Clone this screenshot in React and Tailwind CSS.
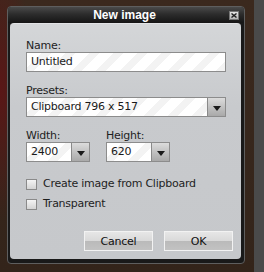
import React from 'react';

function Arrow({ w }) {
  return (
    <div className={`${w} h-full flex items-center justify-center border-l border-[#8a8a8a] bg-[linear-gradient(#dcdcdc,#c4c4c4_45%,#a9a9a9)]`}>
      <svg width="8" height="5" viewBox="0 0 8 5" className="mt-[2px]">
        <path d="M0 0h8L4 5z" fill="#1a1a1a" />
      </svg>
    </div>
  );
}

const stripes = 'bg-[repeating-linear-gradient(135deg,#ffffff_0px,#ffffff_10px,#f3f3f3_10px,#f3f3f3_17px)]';

function Field({ value, width, arrowW }) {
  return (
    <div className={`${width} h-[20px] flex border border-[#8c8c8c] ${stripes}`}>
      <div className="flex-1 pl-[4px] leading-[18px] text-[#1a1a1a]">{value}</div>
      {arrowW && <Arrow w={arrowW} />}
    </div>
  );
}

function Check({ label }) {
  return (
    <div className="flex items-center h-[14px] gap-[6px]">
      <div className="w-[11px] h-[11px] border border-[#8a8a8a] bg-[linear-gradient(#f4f4f4,#d4d4d4)]" />
      <span className="text-[#1e1e1e] leading-[14px]">{label}</span>
    </div>
  );
}

function Btn({ children }) {
  return (
    <div className="w-[69px] h-[20px] border border-[#f2f2f2] bg-[linear-gradient(#e6e6e6,#d9d9d9_50%,#bababa_50%,#c2c2c2)] flex items-center justify-center text-[#111] leading-none">
      {children}
    </div>
  );
}

export default function App() {
  return (
    <div className="flex w-[264px] h-[272px] bg-[radial-gradient(ellipse_34px_130px_at_0px_90px,#5a1616,transparent),linear-gradient(#3b291e,#33241a)] font-['DejaVu_Sans',sans-serif] text-[11px] tracking-[-0.25px]">
      <div className="w-[254px] pt-[6px] pl-[7px]">
        <div className="w-[238px] h-[258px] rounded-[4px] border border-[#5e5e5e] bg-[#191919] flex flex-col pl-[2px] pr-[3px] pb-[4px]">
          <div className="h-[16px] grid grid-cols-[1fr_auto_1fr] items-center bg-[linear-gradient(#4a4a4a,#2c2c2c_45%,#151515)] -mx-[2px] px-[2px] rounded-t-[3px] mr-[-3px] pr-[5px]">
            <div />
            <div className="text-white font-['Liberation_Sans',sans-serif] font-bold text-[12px] leading-none tracking-normal">New image</div>
            <div className="justify-self-end w-[10px] h-[9px] bg-[linear-gradient(#e4e4e4,#b8b8b8)] border border-[#777] flex items-center justify-center">
              <svg width="6" height="5" viewBox="0 0 6 5">
                <path d="M0.5 0.5L5.5 4.5M5.5 0.5L0.5 4.5" stroke="#222" strokeWidth="1.4" />
              </svg>
            </div>
          </div>
          <div className="flex-1 rounded-[4px] bg-[linear-gradient(#d4d6d8,#c8cacd_35%,#c6c8cb)] border-t border-[#e2e3e5] flex flex-col pl-[16px] pr-[15px] pt-[15px] pb-[8px]">
            <div className="leading-[13px] text-[#1e1e1e]">Name:</div>
            <Field value="Untitled" width="w-[200px]" />
            <div className="mt-[12px] leading-[13px] text-[#1e1e1e]">Presets:</div>
            <Field value="Clipboard 796 x 517" width="w-[200px]" arrowW="w-[18px]" />
            <div className="mt-[12px] flex gap-[16px]">
              <div>
                <div className="leading-[13px] text-[#1e1e1e]">Width:</div>
                <Field value="2400" width="w-[64px]" arrowW="w-[18px]" />
              </div>
              <div>
                <div className="leading-[13px] text-[#1e1e1e]">Height:</div>
                <Field value="620" width="w-[64px]" arrowW="w-[18px]" />
              </div>
            </div>
            <div className="mt-[15px] flex flex-col gap-[6px]">
              <Check label="Create image from Clipboard" />
              <Check label="Transparent" />
            </div>
            <div className="mt-auto flex justify-end gap-[11px] -mr-[7px]">
              <Btn>Cancel</Btn>
              <Btn>OK</Btn>
            </div>
          </div>
        </div>
      </div>
      <div className="w-[10px] bg-[#4a4a4a]" />
    </div>
  );
}
